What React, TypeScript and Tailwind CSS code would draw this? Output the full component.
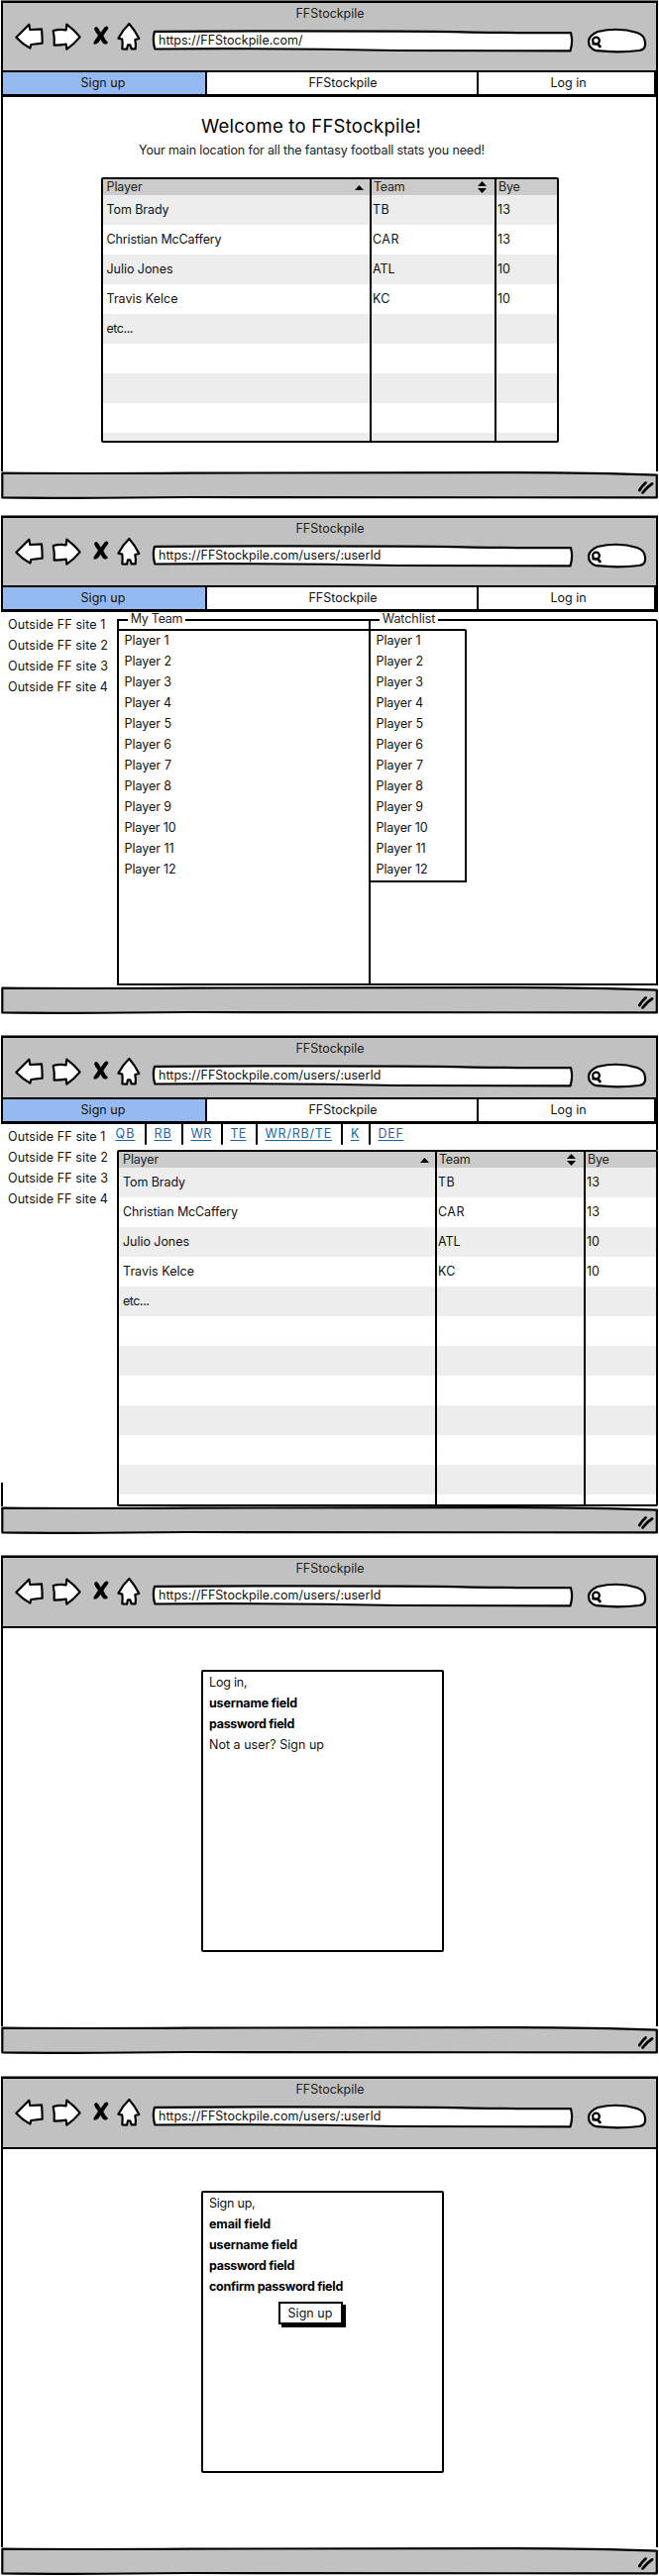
import { useLayoutEffect, useRef, useState, type ReactNode } from "react";
import clsx from "clsx";

/** Text whose tracking is adjusted so that it spans exactly `w` pixels. */
function Label({ w, className, children }: { w: number; className?: string; children: string }) {
  const ref = useRef<HTMLSpanElement>(null);
  const [spacing, setSpacing] = useState(0);
  useLayoutEffect(() => {
    const el = ref.current;
    if (!el) return;
    el.style.letterSpacing = "0px";
    const natural = el.getBoundingClientRect().width;
    setSpacing((w - natural) / children.length);
  }, [w, children]);
  return (
    <span ref={ref} className={clsx("inline-block whitespace-pre", className)} style={{ letterSpacing: `${spacing}px` }}>
      {children}
    </span>
  );
}

function Toolbar({ url, urlWidth, className }: { url: string; urlWidth: number; className?: string }) {
  return (
    <div className={clsx("flex shrink-0 flex-col border-2 border-b-0 border-black bg-[#c1c1c1] shadow-[0_-1px_0_#777]", className)}>
      <div className="flex h-[22px] items-center justify-center pl-px text-[#222]">
        <Label w={69}>FFStockpile</Label>
      </div>
      <div className="flex h-[34px]">
        <svg className="h-[34px] w-[150px] shrink-0 overflow-visible" viewBox="9 75 450 102" fill="#fff" stroke="#000" strokeWidth="6.5" strokeLinejoin="round" strokeLinecap="round">
          <path d="M49 113 L88 74 L91 90 L126 88 Q128 110 128 131 L94 135 L91 146 Q68 133 49 113Z" />
          <path d="M161 93 Q180 88 200 91 L202 74 Q224 90 242 112 Q224 134 202 149 L200 134 Q184 137 164 137 Q166 115 161 93Z" />
          <g stroke="none" fill="#000">
            <path d="M285 87 Q290 76 298 86 L305 98 L317 82 Q328 75 328 86 Q322 94 313 108 Q318 120 327 129 Q322 137 312 131 L304 119 Q298 133 287 134 Q280 133 285 125 L297 107 Q287 97 285 87Z" />
          </g>
          <path d="M391 72 Q408 91 421 117 L409 120 Q412 135 410 148 L398 148 L394 136 L387 136 L384 149 L370 148 Q372 133 370 119 L358 116 Q372 90 391 72Z" />
        </svg>
        <div className="relative flex h-[30px] w-[427px] shrink-0 items-center pt-[2px] pl-[7px]">
          <svg className="absolute inset-0 h-[30px] w-[427px]" viewBox="153 25 427 30" fill="#fff" stroke="#000" strokeWidth="2.2" strokeLinejoin="round">
            <path d="M156 31.8 Q153.5 40 156.3 49.5 Q280 48.5 400 51 L575.5 51.4 Q578.5 42 576 33.2 Q520 33.4 440 31.8 Q290 31 156 31.8Z" />
          </svg>
          <Label w={urlWidth} className="relative text-[#111]">{url}</Label>
        </div>
        <svg className="mt-[2px] ml-[11px] h-[30px] w-[64px] shrink-0" viewBox="591 27 64 30" fill="#fff" stroke="#000" strokeWidth="2.2" strokeLinecap="round">
          <path d="M594 42 Q594 36 603 32 Q624 27 643 33 Q651 36 651 43 Q652 50 645 51 Q624 53.5 602 51.2 Q594 49 594 42Z" />
          <circle cx="601.5" cy="41" r="3.4" />
          <path d="M598.5 44.2 L603 44.4 L605.5 47" strokeWidth="2.6" />
        </svg>
      </div>
    </div>
  );
}

function NavBar() {
  return (
    <nav className="flex h-[27px] shrink-0 border-t-2 border-r-4 border-b-[3px] border-l-2 border-black bg-white text-[#111]">
      <div className="flex w-[204px] items-center justify-center bg-[#95baf1] pr-[2px]"><Label w={45}>Sign up</Label></div>
      <div className="flex w-[276px] items-center justify-center border-x-2 border-black pl-[2px]"><Label w={69}>FFStockpile</Label></div>
      <div className="flex flex-1 items-center justify-center pl-[4px]"><Label w={36}>Log in</Label></div>
    </nav>
  );
}

function StatusBar() {
  return (
    <div className="h-[28px] shrink-0">
      <svg className="h-[28px] w-[663px]" viewBox="1 476 663 28" strokeLinecap="round" strokeLinejoin="round">
        <path d="M2.3 477.6 Q80 478.4 190 477.6 L520 477.2 Q600 477.5 662.8 479.6 L662.8 502.4 L190 502 Q80 503.4 2.3 502.4Z" fill="#c1c1c1" stroke="#000" strokeWidth="2.2" />
        <path d="M651.5 487.5 Q648 490.5 645.3 495 M658 488.5 Q653 491.5 648.5 497.5" fill="none" stroke="#000" strokeWidth="2.8" />
      </svg>
    </div>
  );
}

interface BrowserWindowProps {
  url: string;
  urlWidth: number;
  nav?: boolean;
  toolbarClass: string;
  className: string;
  bodyClass: string;
  children: ReactNode;
}

function BrowserWindow({ url, urlWidth, nav, toolbarClass, className, bodyClass, children }: BrowserWindowProps) {
  return (
    <section className={clsx("ml-px w-[663px] shrink-0 pt-px", className)}>
      <div className="flex h-[503px] flex-col">
        <Toolbar url={url} urlWidth={urlWidth} className={toolbarClass} />
        {nav && <NavBar />}
        <div className={clsx("flex min-h-0 flex-1 border-black", bodyClass)}>{children}</div>
        <StatusBar />
      </div>
    </section>
  );
}

const UpIcon = () => (
  <svg className="h-[5px] w-[9px]" viewBox="0 0 9 5"><path d="M4.5 0 L9 5 H0Z" /></svg>
);
const SortIcon = () => (
  <svg className="h-[12px] w-[9px]" viewBox="0 0 9 12"><path d="M4.5 0 L9 5 H0Z M0 7 H9 L4.5 12Z" /></svg>
);

type Cell = [string, number];
const players: [Cell, Cell, Cell][] = [
  [["Tom Brady", 63], ["TB", 17], ["13", 13]],
  [["Christian McCaffery", 116], ["CAR", 27], ["13", 13]],
  [["Julio Jones", 67], ["ATL", 22.5], ["10", 13]],
  [["Travis Kelce", 72], ["KC", 17.5], ["10", 13]],
  [["etc...", 26.5], ["", 0], ["", 0]],
];

function PlayerTable({ className, columns, rowCount, firstPad }: { className: string; columns: string; rowCount: number; firstPad: string }) {
  const rows = Array.from({ length: rowCount }, (_, i) => players[i]);
  return (
    <div className={clsx("flex flex-col overflow-hidden rounded-[2px] border-2 border-black bg-white text-[#111]", className)}>
      <div className={clsx("grid h-[16px] shrink-0 bg-[#cbcbcb] text-[#222]", columns)}>
        <div className={clsx("flex items-center justify-between pr-[6px]", firstPad)}><Label w={36}>Player</Label><UpIcon /></div>
        <div className="flex items-center justify-between border-l-2 border-black pr-[8px] pl-[2px]"><Label w={31.5}>Team</Label><SortIcon /></div>
        <div className="flex items-center border-l-2 border-black pl-[2px]"><Label w={21.5}>Bye</Label></div>
      </div>
      {rows.map((row, i) => (
        <div key={i} className={clsx("grid h-[30px] shrink-0", columns, i % 2 === 0 ? "bg-[#ededed]" : "bg-white")}>
          <div className={clsx("flex items-center", firstPad)}>{row && <Label w={row[0][1]}>{row[0][0]}</Label>}</div>
          <div className="flex items-center border-l-2 border-black pl-px">{row && row[1][0] && <Label w={row[1][1]}>{row[1][0]}</Label>}</div>
          <div className="flex items-center border-l-2 border-black pl-px">{row && row[2][0] && <Label w={row[2][1]}>{row[2][0]}</Label>}</div>
        </div>
      ))}
    </div>
  );
}

function Sidebar({ children }: { children?: ReactNode }) {
  return (
    <aside className="flex w-[117px] shrink-0 flex-col pt-[2px] text-[#111]">
      {[1, 2, 3, 4].map((n) => (
        <div key={n} className="flex h-[21px] items-center pl-[7px]">
          <Label w={n === 1 ? 98.5 : 101}>{`Outside FF site ${n}`}</Label>
        </div>
      ))}
      {children}
    </aside>
  );
}

function PlayerList() {
  return (
    <ul className="-mt-px pl-[5.5px] text-[#111]">
      {Array.from({ length: 12 }, (_, i) => i + 1).map((n) => (
        <li key={n} className="flex h-[21px] items-center">
          <Label w={n === 1 ? 45 : n < 10 ? 47.5 : n === 11 ? 50 : 52}>{`Player ${n}`}</Label>
        </li>
      ))}
    </ul>
  );
}

function GroupTitle({ w, className, children }: { w: number; className: string; children: string }) {
  return (
    <div className={clsx("absolute -top-[9px] flex h-[13px] items-center justify-center bg-white leading-[13px] text-[#222]", className)}>
      <Label w={w}>{children}</Label>
    </div>
  );
}

function Dialog({ lines, children }: { lines: { text: string; w: number; bold?: boolean }[]; children?: ReactNode }) {
  return (
    <div className="mt-[42px] ml-[200px] h-[285px] w-[245px] rounded-[2px] border-2 border-black bg-white text-[#111]">
      {lines.map(({ text, w, bold }) => (
        <div key={text} className="flex h-[21px] items-center pl-[6px]">
          <Label w={w} className={bold ? "font-bold text-black" : ""}>{text}</Label>
        </div>
      ))}
      {children}
    </div>
  );
}

const positions: Cell[] = [["QB", 20], ["RB", 18], ["WR", 21], ["TE", 16], ["WR/RB/TE", 67.5], ["K", 8.5], ["DEF", 26]];
const userUrl = "https://FFStockpile.com/users/:userId";

export default function App() {
  return (
    <main className="flex h-[2601px] w-[665px] flex-col overflow-hidden bg-white font-['Inter','Liberation_Sans',sans-serif] text-[12.5px] leading-[16px]">
      <BrowserWindow url="https://FFStockpile.com/" urlWidth={145.5} nav toolbarClass="h-[70px]" className="h-[520px]" bodyClass="flex-col border-x-2">
        <h1 className="mt-[16px] ml-[200px] h-[26px] text-[18.5px] leading-[26px] text-black"><Label w={222}>Welcome to FFStockpile!</Label></h1>
        <p className="mt-[2px] ml-[137px] h-[20px] leading-[20px] text-[#222]"><Label w={349}>Your main location for all the fantasy football stats you need!</Label></p>
        <PlayerTable className="mt-[17px] ml-[99px] h-[268px] w-[462px]" columns="grid-cols-[269px_126px_1fr]" rowCount={9} firstPad="pl-[3.5px]" />
      </BrowserWindow>

      <BrowserWindow url={userUrl} urlWidth={224.5} nav toolbarClass="h-[70px]" className="h-[525px]" bodyClass="">
        <Sidebar />
        <div className="relative mt-[7px] h-[370px] w-[254px] shrink-0 border-y-2 border-l-2 border-black">
          <GroupTitle w={52.5} className="left-[9px] w-[58px]">My Team</GroupTitle>
          <div className="mt-[8px] border-t-2 border-black"><PlayerList /></div>
        </div>
        <div className="relative mt-[7px] h-[370px] w-[292px] shrink-0 rounded-tr-[3px] border-2 border-black">
          <GroupTitle w={53.5} className="left-[9px] w-[59px]">Watchlist</GroupTitle>
          <div className="mt-[8px] -ml-[2px] h-[256px] w-[99px] rounded-tr-[2px] border-2 border-black"><PlayerList /></div>
        </div>
      </BrowserWindow>

      <BrowserWindow url={userUrl} urlWidth={224.5} nav toolbarClass="h-[62px]" className="h-[525px]" bodyClass="">
        <Sidebar><div className="mt-auto h-[24px] w-[2px] bg-black" /></Sidebar>
        <div className="flex flex-1 flex-col">
          <div className="-ml-[2px] flex h-[26px] items-start border-r-2 border-black pl-[0.5px]">
            {positions.map(([name, w], i) => (
              <div key={name} className="flex">
                {i > 0 && <span className="mr-[8px] ml-[9px] h-[21px] w-[2px] rounded-b-full bg-black" />}
                <a className="mt-[2px] h-[16px] text-[#1a65a8]"><Label w={w} className="underline decoration-1 underline-offset-2">{name}</Label></a>
              </div>
            ))}
          </div>
          <PlayerTable className="h-[360px] w-[546px]" columns="grid-cols-[319px_150px_1fr]" rowCount={12} firstPad="pl-[4px]" />
        </div>
      </BrowserWindow>

      <BrowserWindow url={userUrl} urlWidth={224.5} toolbarClass="h-[71px]" className="h-[526px]" bodyClass="border-x-2 border-t-2">
        <Dialog
          lines={[
            { text: "Log in,", w: 38.5 },
            { text: "username field", w: 89, bold: true },
            { text: "password field", w: 86, bold: true },
            { text: "Not a user? Sign up", w: 116 },
          ]}
        />
      </BrowserWindow>

      <BrowserWindow url={userUrl} urlWidth={224.5} toolbarClass="h-[71px]" className="h-[505px]" bodyClass="border-x-2 border-t-2">
        <Dialog
          lines={[
            { text: "Sign up,", w: 46.5 },
            { text: "email field", w: 62, bold: true },
            { text: "username field", w: 89, bold: true },
            { text: "password field", w: 86, bold: true },
            { text: "confirm password field", w: 135, bold: true },
          ]}
        >
          <button className="mt-[5px] ml-[75.5px] flex h-[23px] w-[65px] items-center justify-center border-2 border-black bg-white shadow-[3px_3px_0_#000]">
            <Label w={45}>Sign up</Label>
          </button>
        </Dialog>
      </BrowserWindow>
    </main>
  );
}
